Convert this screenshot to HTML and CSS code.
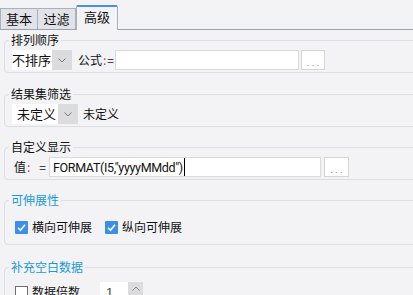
FILE: index.html
```html
<!DOCTYPE html>
<html>
<head>
<meta charset="utf-8">
<link rel="stylesheet" href="styles.css">
</head>
<body>
<div class="tabbar">
  <div class="tab">基本</div>
  <div class="tab">过滤</div>
  <div class="tab active">高级</div>
</div>
<div class="content">
  <fieldset class="group g1">
    <legend>排列顺序</legend>
    <div class="row">
      <div class="select s1"><span class="select-text">不排序</span><span class="select-btn"><svg width="8" height="5" viewBox="0 0 8 5"><path d="M0.5 0.5 L4 4 L7.5 0.5" fill="none" stroke="#777" stroke-width="1"/></svg></span></div>
      <span class="label formula-label">公式<span class="colon">:</span>=</span>
      <div class="input formula"></div>
      <div class="more">. . .</div>
    </div>
  </fieldset>

  <fieldset class="group g2">
    <legend>结果集筛选</legend>
    <div class="row">
      <div class="select s2"><span class="select-text">未定义</span><span class="select-btn"><svg width="8" height="5" viewBox="0 0 8 5"><path d="M0.5 0.5 L4 4 L7.5 0.5" fill="none" stroke="#777" stroke-width="1"/></svg></span></div>
      <span class="label undefined">未定义</span>
    </div>
  </fieldset>

  <fieldset class="group g3">
    <legend>自定义显示</legend>
    <div class="row">
      <span class="label value-label">值<span class="colon">:</span></span>
      <span class="label eq">=</span>
      <div class="input value"><span class="value-text">FORMAT(I5,"yyyyMMdd")</span><span class="caret"></span></div>
      <div class="more">. . .</div>
    </div>
  </fieldset>

  <fieldset class="group g4">
    <legend class="blue">可伸展性</legend>
    <div class="row checks">
      <span class="check on"><svg width="13" height="13" viewBox="0 0 13 13"><path d="M3 6.8 L5.4 9.2 L10 3.8" fill="none" stroke="#fff" stroke-width="1.6"/></svg></span>
      <span class="label check-label">横向可伸展</span>
      <span class="check on second"><svg width="13" height="13" viewBox="0 0 13 13"><path d="M3 6.8 L5.4 9.2 L10 3.8" fill="none" stroke="#fff" stroke-width="1.6"/></svg></span>
      <span class="label check-label">纵向可伸展</span>
    </div>
  </fieldset>

  <fieldset class="group g5">
    <legend class="blue">补充空白数据</legend>
    <div class="row checks5">
      <span class="check off"></span>
      <span class="label check-label">数据倍数</span>
      <div class="spinner"><span class="spin-text">1</span><span class="spin-btn"><svg width="8" height="5" viewBox="0 0 8 5"><path d="M0.5 4.5 L4 1 L7.5 4.5" fill="none" stroke="#888" stroke-width="1"/></svg></span></div>
    </div>
  </fieldset>
</div>
</body>
</html>
```
FILE: styles.css
```css
html, body {
  margin: 0;
  padding: 0;
  background: #f3f3f6;
  overflow: hidden;
  font-family: "Noto Sans CJK SC", "Noto Sans", sans-serif;
  font-size: 12px;
  color: #111;
}

.tabbar {
  display: flex;
  align-items: flex-end;
  height: 29px;
  border-bottom: 1px solid #96a2b2;
}

.tab {
  box-sizing: border-box;
  width: 38px;
  height: 21px;
  border: 1px solid #a9b1bd;
  border-bottom: 0;
  background: #e2e3e8;
  font-size: 13px;
  line-height: 20px;
  text-align: center;
  color: #111;
}

.tab + .tab {
  border-left: 0;
  width: 38px;
}

.tab.active {
  width: 42px;
  height: 25px;
  border: 1px solid #a9b1bd;
  border-top: 2px solid #4b90dc;
  border-bottom: 0;
  border-radius: 2px 2px 0 0;
  background: #f3f3f6;
  margin-bottom: -1px;
  line-height: 20px;
}

.content {
  padding-top: 2px;
}

.group {
  margin: 12px -12px 0 4px;
  padding: 2px 0 2px 7px;
  border: 1px solid #dddee3;
  border-radius: 4px;
  min-width: 0;
}

.group.g1 {
  margin-top: 0;
}

.group.g2 {
  margin-top: 13px;
}

.group.g5 {
  margin-top: 14px;
}

legend {
  font-size: 12px;
  line-height: 16px;
  padding: 0 2px;
  margin-left: -3px;
  color: #111;
}

legend.blue {
  color: #1a9ad8;
}

.row {
  display: flex;
  align-items: center;
  height: 20px;
}

.select {
  display: flex;
  height: 20px;
}

.select-text {
  background: #fff;
  font-size: 13px;
  line-height: 20px;
}

.s1 .select-text {
  width: 40px;
}

.s2 .select-text {
  width: 41px;
  padding-left: 5px;
}

.select-btn {
  width: 20px;
  background: #dcdcdf;
  display: flex;
  align-items: center;
  justify-content: center;
}

.label {
  line-height: 20px;
  white-space: nowrap;
}

.colon {
  color: #9a3db3;
  margin: 0 1px;
}

.formula-label {
  margin-left: 6px;
}

.input {
  box-sizing: border-box;
  height: 20px;
  background: #fff;
  border: 1px solid #dadada;
}

.formula {
  width: 184px;
  margin-left: 1px;
}

.more {
  box-sizing: border-box;
  height: 20px;
  background: #fff;
  border: 1px solid #d6d6d6;
  margin-left: 2px;
  width: 24px;
  font-family: "Liberation Sans", sans-serif;
  font-size: 9px;
  color: #888;
  line-height: 24px;
  text-align: center;
  letter-spacing: 0;
}

.g3 .more {
  margin-left: 3px;
  width: 25px;
}

.undefined {
  margin-left: 5px;
}

.value-label {
  margin-left: 2px;
}

.eq {
  margin-left: 8px;
}

.value {
  width: 272px;
  margin-left: 3px;
  display: flex;
  align-items: center;
  padding-left: 3px;
}

.value-text {
  font-family: "Roboto", "Liberation Sans", sans-serif;
  font-size: 12.5px;
  color: #111;
  white-space: nowrap;
  letter-spacing: -0.35px;
}

.caret {
  width: 1px;
  height: 18px;
  background: #000;
  margin-left: 1px;
}

.checks {
  padding: 7px 0 5px;
}

.checks5 {
  padding-top: 5px;
}

.check {
  box-sizing: border-box;
  width: 13px;
  height: 13px;
  margin-left: 3px;
  flex: none;
  display: block;
}

.check svg {
  display: block;
}

.check.on {
  background: #3b8fe6;
  border-radius: 1px;
}

.check.second {
  margin-left: 13px;
}

.check.off {
  background: #fff;
  border: 1px solid #6e6e6e;
}

.check-label {
  margin-left: 4px;
}

.spinner {
  display: flex;
  height: 20px;
  margin-left: 20px;
}

.spin-text {
  width: 22px;
  padding-left: 6px;
  background: #fff;
  color: #444;
  font-family: "Liberation Sans", sans-serif;
  font-size: 13px;
  line-height: 22px;
}

.spin-btn {
  width: 15px;
  background: #dcdcdf;
  display: flex;
  justify-content: center;
  padding-top: 4px;
  box-sizing: border-box;
}
```
